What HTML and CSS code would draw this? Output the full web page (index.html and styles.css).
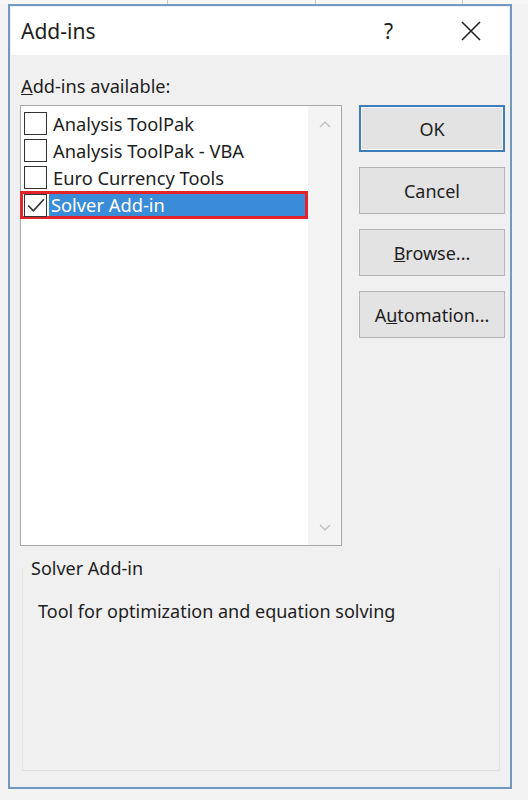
FILE: index.html
```html
<!DOCTYPE html>
<html>
<head>
<meta charset="utf-8">
<link rel="stylesheet" href="styles.css">
</head>
<body>
<div class="sheet-strip">
  <span class="col c1"></span><span class="col c2"></span><span class="col c3"></span>
</div>
<div class="dialog">
  <div class="titlebar">
    <span class="title">Add-ins</span>
    <span class="help">?</span>
    <svg class="close" width="20" height="20" viewBox="0 0 20 20"><path d="M1 1 L19 19 M19 1 L1 19" stroke="#222" stroke-width="1.6" fill="none"/></svg>
  </div>
  <div class="body">
    <div class="label"><u>A</u>dd-ins available:</div>
    <div class="main">
      <div class="listbox">
        <div class="items">
          <div class="item"><span class="cb"></span><span class="txt">Analysis ToolPak</span></div>
          <div class="item"><span class="cb"></span><span class="txt">Analysis ToolPak - VBA</span></div>
          <div class="item"><span class="cb"></span><span class="txt">Euro Currency Tools</span></div>
          <div class="item selected"><span class="cb checked"><svg width="21" height="21" viewBox="0 0 20 20"><path d="M3 10 L8 15 L18 4" stroke="#333" stroke-width="1.6" fill="none"/></svg></span><span class="txt">Solver Add-in</span></div>
        </div>
        <div class="scrollbar">
          <svg class="arrow" width="12" height="8" viewBox="0 0 12 8"><path d="M1 7 L6 2 L11 7" stroke="#c2c2c2" stroke-width="1.5" fill="none"/></svg>
          <svg class="arrow" width="12" height="8" viewBox="0 0 12 8"><path d="M1 1 L6 6 L11 1" stroke="#c2c2c2" stroke-width="1.5" fill="none"/></svg>
        </div>
      </div>
      <div class="buttons">
        <div class="btn default">OK</div>
        <div class="btn">Cancel</div>
        <div class="btn"><u>B</u>rowse...</div>
        <div class="btn">A<u>u</u>tomation...</div>
      </div>
    </div>
    <div class="desc">
      <div class="desc-title">Solver Add-in</div>
      <div class="desc-box">
        <div class="desc-text">Tool for optimization and equation solving</div>
      </div>
    </div>
  </div>
</div>
</body>
</html>
```
FILE: styles.css
```css
html, body {
  margin: 0;
  padding: 0;
}
body {
  width: 528px;
  height: 800px;
  background: #f3f3f3;
  font-family: "Noto Sans", "Open Sans", sans-serif;
  color: #1e1e1e;
  overflow: hidden;
}
.sheet-strip {
  height: 4px;
  background: #f7f7f7;
  display: flex;
}
.col {
  display: block;
  height: 4px;
  border-right: 1px solid #c8c8c8;
}
.c1 { width: 167px; }
.c2 { width: 147px; }
.c3 { width: 146px; }
.dialog {
  margin-left: 8px;
  width: 500px;
  height: 781px;
  border: 2px solid #7598bd;
  background: #f0f0f0;
  box-shadow: inset 0 0 0 1px #e9f0f7;
  display: flex;
  flex-direction: column;
}
.titlebar {
  height: 48px;
  background: #ffffff;
  display: flex;
  align-items: center;
  padding-left: 10px;
  margin: 1px 1px 0 1px;
}
.title {
  font-size: 21px;
  flex: 1;
  margin-top: -1px;
}
.help {
  font-size: 21px;
  width: 14px;
  margin-right: 63px;
}
.close {
  margin-right: 28px;
}
.body {
  padding: 20px 0 0 10px;
  flex: 1;
}
.label {
  font-size: 18.2px;
  height: 30px;
  line-height: 22px;
  margin-left: 1px;
}
.main {
  display: flex;
  gap: 17px;
}
.listbox {
  width: 320px;
  height: 439px;
  border: 1px solid #a9a9a9;
  background: #ffffff;
  display: flex;
}
.items {
  flex: 1;
  padding-top: 4px;
}
.item {
  height: 27px;
  display: flex;
  align-items: center;
  font-size: 18.3px;
}
.cb {
  width: 21px;
  height: 21px;
  border: 1.5px solid #333;
  background: #fff;
  margin-left: 3px;
  margin-right: 6px;
  flex: none;
  display: flex;
}
.txt {
  line-height: 22px;
}
.item.selected {
  box-sizing: border-box;
  border: 3px solid #e3242b;
  margin-left: -1px;
  height: 28px;
}
.item.selected .cb {
  margin-left: 1px;
  margin-right: 2px;
}
.item.selected .txt {
  background: #3b8cd8;
  color: #ffffff;
  flex: 1;
  height: 22px;
  padding-left: 2px;
}
.scrollbar {
  width: 33px;
  background: #f4f4f4;
  display: flex;
  flex-direction: column;
  justify-content: space-between;
  align-items: center;
  padding: 14px 0 13px;
}
.buttons {
  display: flex;
  flex-direction: column;
  gap: 15px;
}
.btn {
  width: 144px;
  height: 45px;
  border: 1px solid #b4b4b4;
  background: #e3e3e3;
  display: flex;
  align-items: center;
  justify-content: center;
  font-size: 18px;
}
.btn.default {
  width: 142px;
  height: 43px;
  border: 2px solid #3f7db6;
  box-shadow: inset 0 0 0 1px #f2f7fc;
}
.desc {
  margin-top: 10px;
}
.desc-title {
  font-size: 18px;
  margin-left: 11px;
  height: 24px;
  line-height: 24px;
}
.desc-box {
  width: 476px;
  height: 201px;
  border: 1px solid #e4e4e4;
  border-top-color: transparent;
  border-bottom-color: #dedede;
  margin-left: 2px;
  margin-top: -12px;
}
.desc-text {
  font-size: 18px;
  margin: 30px 0 0 15px;
}
```
